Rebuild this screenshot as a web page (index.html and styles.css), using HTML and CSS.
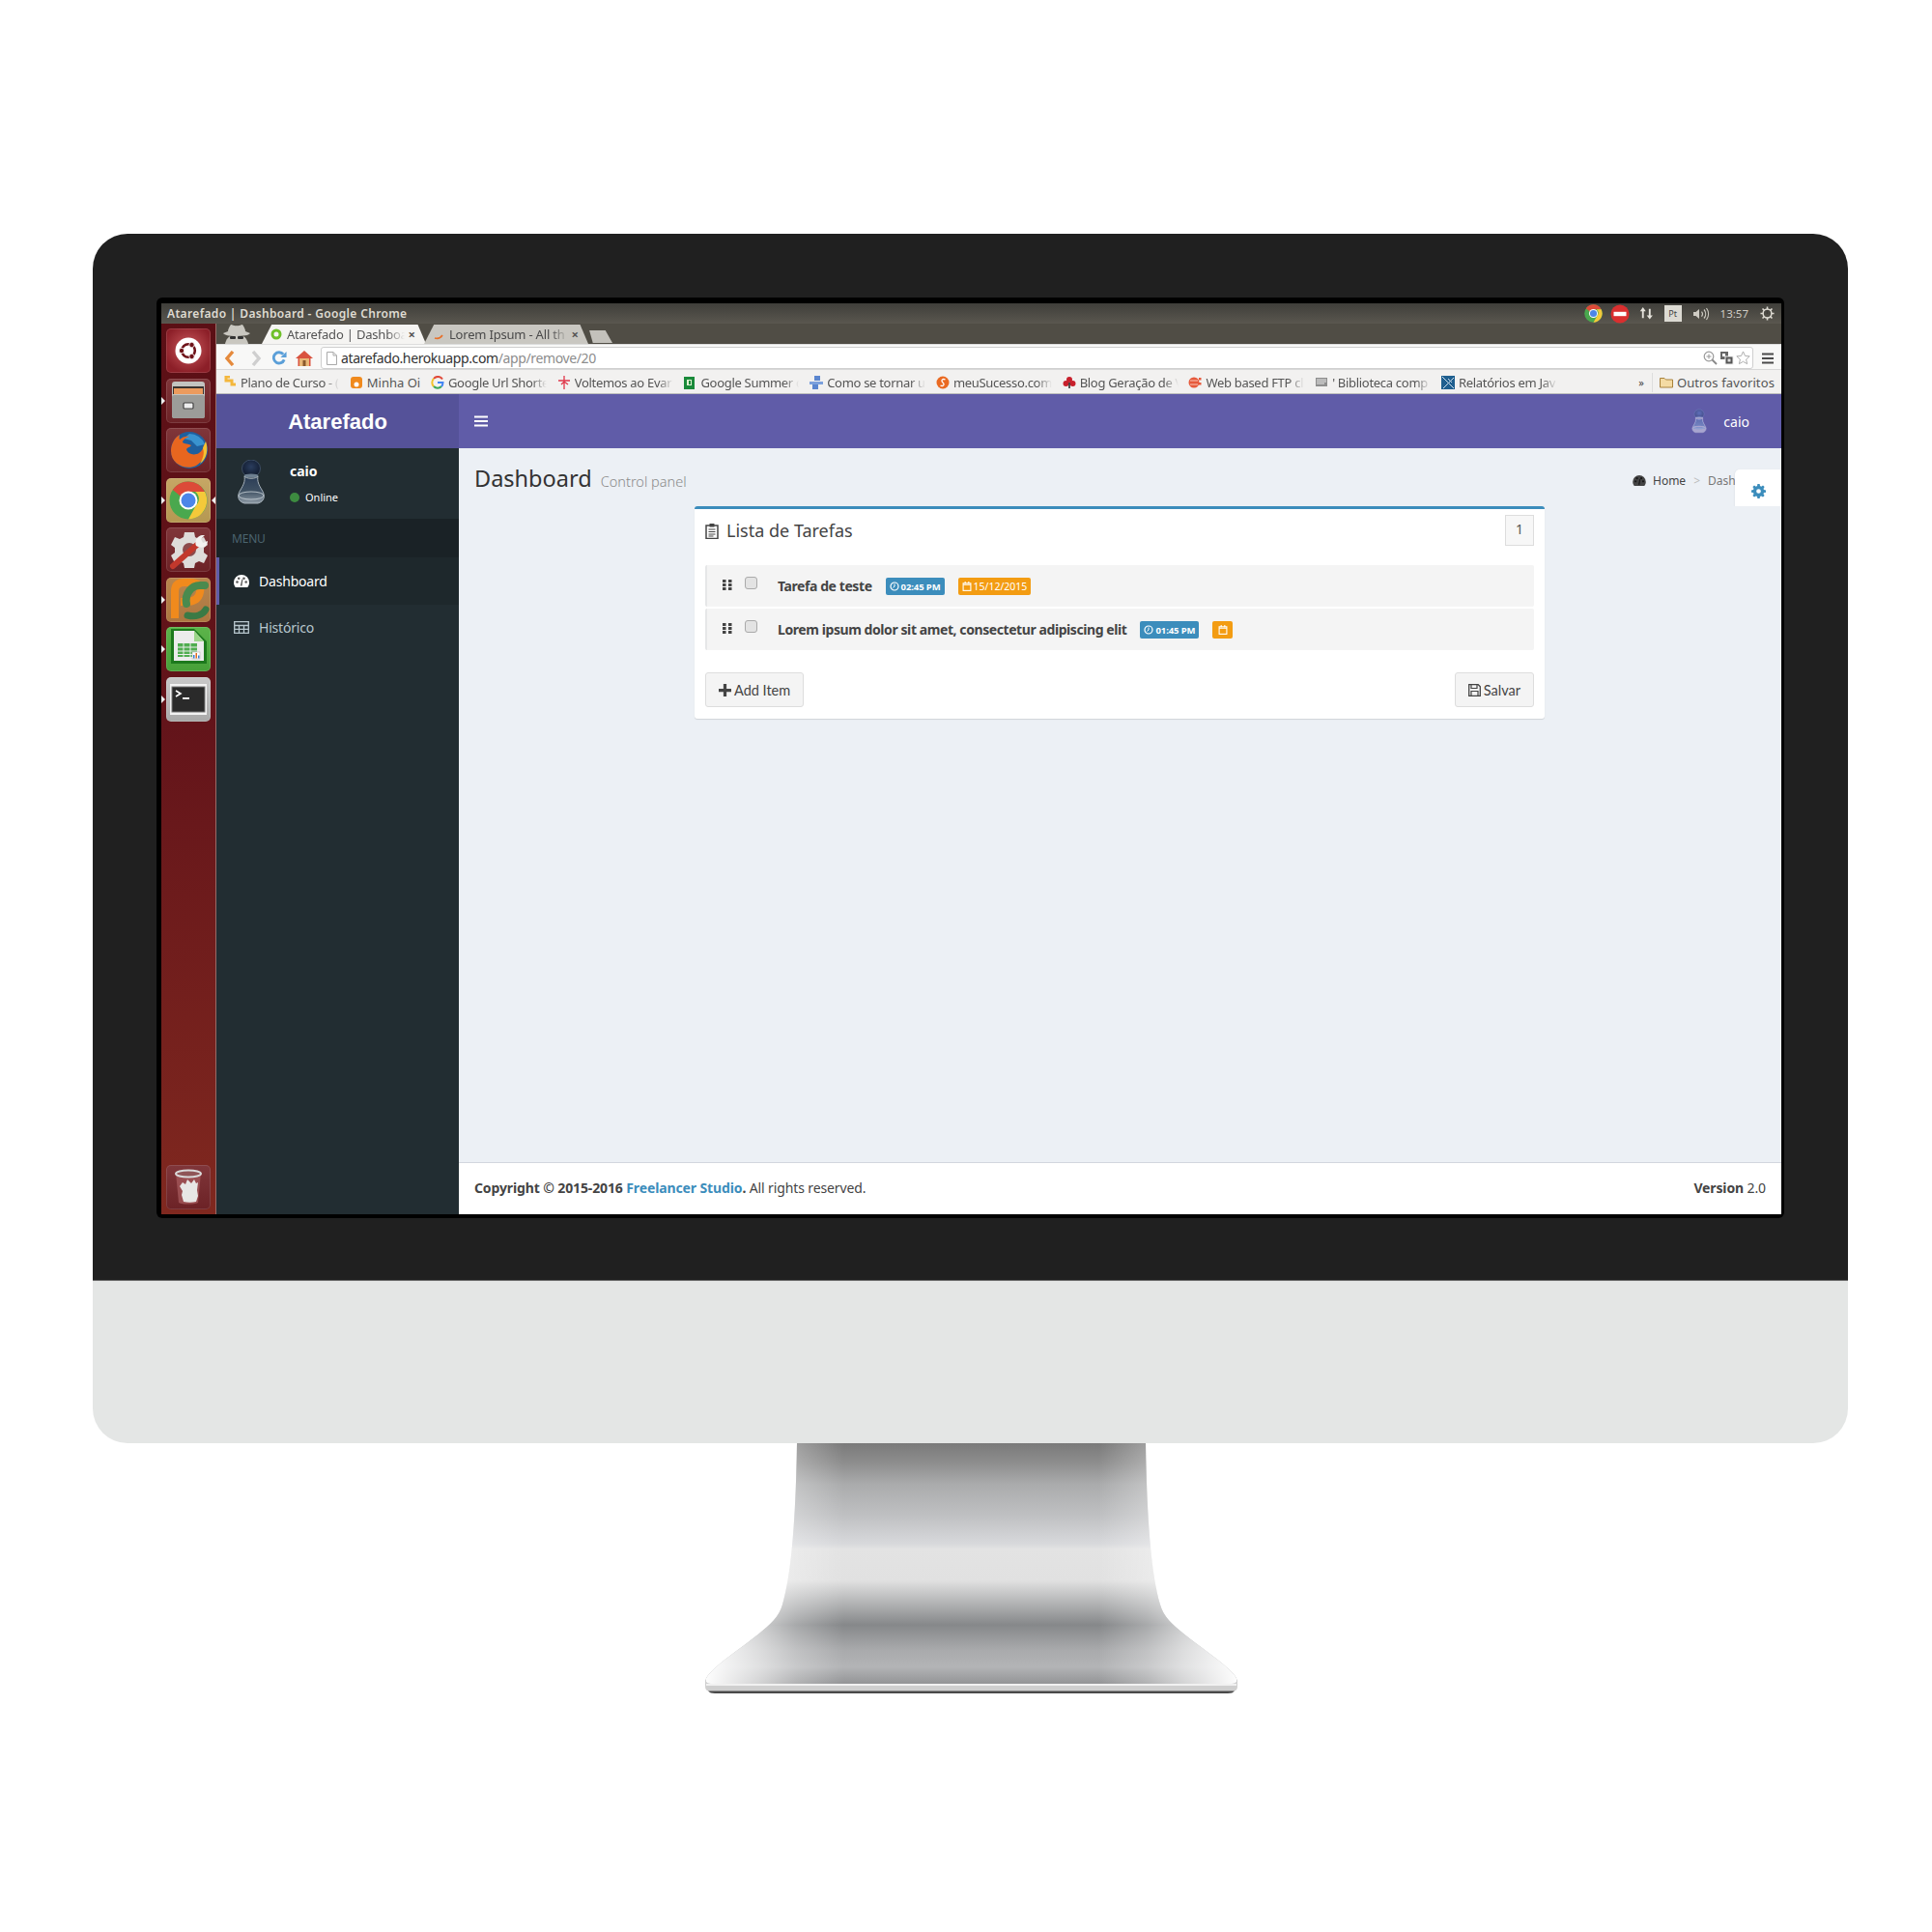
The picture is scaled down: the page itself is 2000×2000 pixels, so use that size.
FILE: index.html
```html
<!DOCTYPE html>
<html lang="pt">
<head>
<meta charset="utf-8">
<title>Atarefado mockup</title>
<link rel="stylesheet" href="styles.css">
</head>
<body>
<svg class="defs" width="0" height="0" aria-hidden="true">
  <defs>
    <linearGradient id="pawnBody" x1="0" y1="0" x2="0" y2="1"><stop offset="0" stop-color="#2a3c56"/><stop offset=".55" stop-color="#3f5163"/><stop offset="1" stop-color="#8f9ba6"/></linearGradient>
    <radialGradient id="pawnHead" cx=".5" cy=".4" r=".6"><stop offset="0" stop-color="#2a3d5e"/><stop offset="1" stop-color="#10192b"/></radialGradient>
    <linearGradient id="standFill" x1="0" y1="0" x2="0" y2="1">
      <stop offset="0" stop-color="#7a7a7a"/><stop offset=".08" stop-color="#8d8d8d"/><stop offset=".17" stop-color="#aaabac"/><stop offset=".3" stop-color="#bfc0c2"/><stop offset=".42" stop-color="#d8d9dc"/><stop offset=".44" stop-color="#e3e3e3"/><stop offset=".57" stop-color="#e1e1e1"/><stop offset=".66" stop-color="#b5b6b7"/><stop offset=".755" stop-color="#86888a"/><stop offset=".86" stop-color="#a9aaac"/><stop offset=".93" stop-color="#b3b4b6"/><stop offset="1" stop-color="#939496"/>
    </linearGradient>
    <linearGradient id="standGlow" x1="0" y1="0" x2="1" y2="0">
      <stop offset="0" stop-color="#fff" stop-opacity=".98"/><stop offset=".1" stop-color="#fff" stop-opacity=".6"/><stop offset=".17" stop-color="#fff" stop-opacity=".28"/><stop offset=".26" stop-color="#fff" stop-opacity="0"/><stop offset=".74" stop-color="#fff" stop-opacity="0"/><stop offset=".83" stop-color="#fff" stop-opacity=".28"/><stop offset=".9" stop-color="#fff" stop-opacity=".6"/><stop offset="1" stop-color="#fff" stop-opacity=".98"/>
    </linearGradient>
    <symbol id="pawn" viewBox="0 0 30 46">
      <ellipse cx="15" cy="9" rx="9.500" ry="9" fill="url(#pawnHead)" stroke="#44566e" stroke-width=".8"/>
      <ellipse cx="15" cy="16.500" rx="7.500" ry="2" fill="#6d7f90"/>
      <path d="M8 17C10 20 20 20 22 17C21 22 23 26 26 31C30 37 29 43 22 45H8C1 43 0 37 4 31C7 26 9 22 8 17Z" fill="url(#pawnBody)" stroke="#a7b2bb" stroke-width="1"/>
      <ellipse cx="15" cy="37" rx="13" ry="4" fill="none" stroke="#c2cbd1" stroke-width=".9"/>
    </symbol>
    <symbol id="dash" viewBox="0 0 16 13">
      <path d="M8 0a8 8 0 0 0-8 8c0 2 .7 3.600 1.800 5h12.400c1.100-1.400 1.800-3 1.800-5a8 8 0 0 0-8-8Z" fill="currentColor"/>
      <circle cx="3.500" cy="7.500" r="1.300" fill="#000" opacity=".65"/><circle cx="5.200" cy="3.800" r="1.300" fill="#000" opacity=".65"/><circle cx="10.500" cy="3.800" r="1.300" fill="#000" opacity=".65"/><circle cx="12.700" cy="7.500" r="1.300" fill="#000" opacity=".65"/>
      <path d="M6.800 11.500 8.400 4.500l1 .2L8.500 11.500Z" fill="#000" opacity=".65"/>
    </symbol>
    <symbol id="chromeLogo" viewBox="0 0 40 40">
      <circle cx="20" cy="20" r="19.500" fill="#4aa84e"/>
      <path d="M20 .5A19.500 19.500 0 0 1 37 11H20A9 9 0 0 0 12 15.800L3.800 9A19.500 19.500 0 0 1 20 .5Z" fill="#dc4a38"/>
      <path d="M37 11A19.500 19.500 0 0 1 20 39.500L28 25A9 9 0 0 0 27 11Z" fill="#f4c93a"/>
      <circle cx="20" cy="20" r="9.500" fill="#fff"/><circle cx="20" cy="20" r="7.500" fill="#4c86e8"/>
    </symbol>
  </defs>
</svg>

<main class="monitor">
  <section class="bezel">
    <div class="screen">
      <header class="ubuntu-bar">
        <span class="window-title">Atarefado | Dashboard - Google Chrome</span>
        <div class="tray">
          <svg class="tray-round"><use href="#chromeLogo"/></svg>
          <svg class="tray-stop" viewBox="0 0 20 20"><circle cx="10" cy="10" r="9.500" fill="#d92f2f"/><rect x="3.500" y="7.800" width="13" height="4.400" fill="#fff"/></svg>
          <svg class="tray-net" viewBox="0 0 16 16"><path d="M4 1 .8 5.500h2.200V13h2V5.500h2.200ZM11.500 14.500 14.800 10h-2.300V3h-2v7H8.200Z" fill="#e6e3dc"/></svg>
          <span class="tray-lang">Pt</span>
          <svg class="tray-vol" viewBox="0 0 18 14"><path d="M1 5h2.500L7 2v10L3.500 9H1Z" fill="#cfccc4"/><path d="M9.500 4.500a4 4 0 0 1 0 5M12 2.500a7 7 0 0 1 0 9M14.500 1a10 10 0 0 1 0 12" fill="none" stroke="#cfccc4" stroke-width="1.200"/></svg>
          <span class="tray-time">13:57</span>
          <svg class="tray-gear" viewBox="0 0 16 16"><circle cx="8" cy="8" r="4.700" fill="none" stroke="#dedbd3" stroke-width="1.600"/><path d="M8 .5v3M8 12.500v3M.5 8h3M12.500 8h3M2.700 2.700l2 2M11.300 11.300l2 2M2.700 13.300l2-2M11.300 4.700l2-2" stroke="#dedbd3" stroke-width="1.700"/><path d="M8 4.500v4" stroke="#3f3d39" stroke-width="1.500"/></svg>
        </div>
      </header>
      <div class="desktop">
        <nav class="launcher">
          <div class="tile tile-ubuntu">
            <svg viewBox="0 0 46 46"><circle cx="23" cy="23" r="13.500" fill="#fff"/><circle cx="23" cy="23" r="6.800" fill="none" stroke="#6e1218" stroke-width="2.600"/><circle cx="16" cy="23" r="2.700" fill="#6e1218" stroke="#fff" stroke-width=".8"/><circle cx="26.500" cy="17" r="2.700" fill="#6e1218" stroke="#fff" stroke-width=".8"/><circle cx="26.500" cy="29" r="2.700" fill="#6e1218" stroke="#fff" stroke-width=".8"/></svg>
          </div>
          <div class="tile tile-dark pip">
            <svg viewBox="0 0 46 46"><rect x="6" y="3" width="34" height="38" rx="3" fill="#c3c3c0"/><rect x="7" y="8" width="32" height="8" fill="#3a3330"/><rect x="8" y="10" width="30" height="6" fill="#ec9b5e"/><rect x="6" y="17" width="34" height="24" rx="2" fill="#9c9c99"/><rect x="18" y="25" width="10" height="6" rx="1" fill="#eee" stroke="#444" stroke-width="1.200"/></svg>
          </div>
          <div class="tile tile-dark">
            <svg viewBox="0 0 46 46"><circle cx="24" cy="23" r="19" fill="#1f5f9e"/><path d="M24 6a17 17 0 0 1 16 11l-8 2-6-6-8-2Z" fill="#3a93cf"/><path d="M5 24c0-8 4-14 9-17-1 3 0 5 0 5 3-3 7-4 10-3-4 1-7 4-7 6 2 2 6 1 9 3-1 2-4 2-5 4 1 5 8 7 13 4 3-2 5-6 5-9 3 9-1 18-8 22-10 5-26-1-26-15Z" fill="#e8661f"/><path d="M41 14c3 8 1 18-6 23 3-5 5-11 3-16 1-3 2-5 3-7Z" fill="#f6c230"/></svg>
          </div>
          <div class="tile tile-gold pip pip-both">
            <svg viewBox="0 0 46 46"><use href="#chromeLogo" x="3" y="3" width="40" height="40"/></svg>
          </div>
          <div class="tile tile-dark">
            <svg viewBox="0 0 46 46"><path d="M19 5h10l1 5 4 2 5-2 4 8-4 3v5l4 3-4 8-5-2-4 2-1 5H19l-1-5-4-2-5 2-4-8 4-3v-5l-4-3 4-8 5 2 4-2Z" fill="#dedcda"/><circle cx="24" cy="23" r="7" fill="#8b4a4c"/><path d="M7 40 33 17" stroke="#c2382c" stroke-width="6" stroke-linecap="round"/><path d="M31 19c-2-5 1-10 6-11l3 0-4 4 2 4 5-2c0 5-5 9-12 5Z" fill="#f2f2f0"/></svg>
          </div>
          <div class="tile tile-amber pip">
            <svg viewBox="0 0 46 46"><path d="M9 42V14Q9 5 19 5H25Q37 5 35 15Q33 25 21 25H15" fill="none" stroke="#f08a1d" stroke-width="8" stroke-linejoin="round"/><path d="M40 8H35C26 8 19 17 21 27" fill="none" stroke="#4a8a4e" stroke-width="8" stroke-linecap="round"/><path d="M22 39C30 41 38 39 41 33" fill="none" stroke="#3a7a45" stroke-width="7" stroke-linecap="round"/></svg>
          </div>
          <div class="tile tile-green pip">
            <svg viewBox="0 0 46 46"><path d="M5 2h24l13 13v23H5Z" fill="#1d7a1d"/><path d="M8 4h21l10 11v20H8Z" fill="#ececec"/><path d="M29 4v11h10Z" fill="#9cd58a"/><rect x="12" y="17" width="20" height="14" fill="#4fad4f"/><path d="M12 21h20M12 25h20M12 28.500h20M18 17v14M25 17v14" stroke="#eee" stroke-width="1"/><rect x="27" y="26" width="8" height="7" fill="#fff" stroke="#aaa" stroke-width=".5"/><rect x="28" y="29" width="1.500" height="3.500" fill="#3a7bd5"/><rect x="30.500" y="27" width="1.500" height="5.500" fill="#e26a1d"/><rect x="33" y="29.500" width="1.500" height="3" fill="#3a7bd5"/></svg>
          </div>
          <div class="tile tile-silver pip">
            <svg viewBox="0 0 46 46"><rect x="4" y="7" width="38" height="32" fill="#f2f2f2"/><rect x="6" y="10" width="34" height="26" fill="#2a2a2a" stroke="#777" stroke-width="1"/><path d="M10 14l5 3-5 3" fill="none" stroke="#fff" stroke-width="1.600"/><rect x="17" y="21" width="7" height="1.800" fill="#fff"/></svg>
          </div>
          <div class="tile tile-dark tile-trash">
            <svg viewBox="0 0 46 46"><path d="M10 8h26l-3 31c-4 2-16 2-20 0Z" fill="#a55a5c" opacity=".75"/><ellipse cx="23" cy="9" rx="13" ry="3.500" fill="#8f5557" stroke="#d9d9d9" stroke-width="2"/><path d="M14 22l3-4 3 2 2-5 4 4 3-4 2 4 2-1-1 8 1 6-2 6c-4 1-9 1-13 0l-2-7 1-4Z" fill="#e7e7e5"/></svg>
          </div>
        </nav>

        <div class="browser">
          <div class="tabstrip">
            <svg class="spy" viewBox="0 0 30 20"><path d="M9 0c2 0 4 2 6 1 2 1 4-1 6-1 2 3 3 5 3 7l5 2c-2 2-5 3-14 3S3 11 1 9l5-2c0-2 1-4 3-7Z" fill="#c9c7c0"/><path d="M3 20c1-5 4-8 6-8h12c2 0 5 3 6 8Z" fill="#c9c7c0"/><rect x="8" y="12" width="6" height="3" rx="1" fill="#333"/><rect x="16" y="12" width="6" height="3" rx="1" fill="#333"/></svg>
            <div class="tab tab-active">
              <svg class="favicon" viewBox="0 0 12 12"><circle cx="6" cy="6" r="4" fill="none" stroke="#6fc02a" stroke-width="3"/></svg>
              <span class="tab-label">Atarefado | Dashboa</span>
              <span class="tab-x">×</span>
            </div>
            <div class="tab tab-idle">
              <svg class="favicon" viewBox="0 0 12 12"><path d="M2 10c3 1 6 0 8-3" fill="none" stroke="#e8702a" stroke-width="1.600"/></svg>
              <span class="tab-label">Lorem Ipsum - All th</span>
              <span class="tab-x">×</span>
            </div>
            <div class="tab-new"></div>
          </div>
          <div class="toolbar">
            <svg class="tool tool-back" viewBox="0 0 12 16"><path d="M9 1 3 8l6 7" fill="none" stroke="#e58a3c" stroke-width="3.400"/></svg>
            <svg class="tool tool-fwd" viewBox="0 0 12 16"><path d="M3 1l6 7-6 7" fill="none" stroke="#cfcfcf" stroke-width="3.400"/></svg>
            <svg class="tool tool-reload" viewBox="0 0 16 16"><path d="M13 10a6 6 0 1 1-1-6" fill="none" stroke="#5b9fd8" stroke-width="3"/><path d="M15.500 1v6.500H9Z" fill="#5b9fd8"/></svg>
            <svg class="tool tool-home" viewBox="0 0 18 16"><path d="M9 0 0 8h2.500v8h13V8H18Z" fill="#d9533f"/><rect x="4" y="8" width="10" height="8" fill="#e8b777"/><rect x="7.500" y="10" width="3" height="6" fill="#8a5a2c"/></svg>
            <div class="omnibox">
              <svg class="page-ico" viewBox="0 0 11 14"><path d="M.5.500h6.500l3.500 3.500v9.500H.5Z" fill="#fff" stroke="#aaa"/><path d="M7 .5V4h3.500" fill="none" stroke="#aaa"/></svg>
              <span class="url">atarefado.herokuapp.com<span class="url-path">/app/remove/20</span></span>
              <svg class="omni-ico" viewBox="0 0 15 15"><circle cx="6" cy="6" r="4.800" fill="#fff" stroke="#999" stroke-width="1.200"/><path d="M3.500 6h5M6 3.500v5" stroke="#999"/><path d="M9.500 9.500 14 14" stroke="#888" stroke-width="1.800"/></svg>
              <svg class="omni-ico" viewBox="0 0 15 15"><rect x="1" y="1" width="8" height="8" fill="#666"/><rect x="6" y="6" width="8" height="8" fill="#555" stroke="#eee"/><rect x="3" y="3" width="3" height="3" fill="#fff"/><rect x="8.500" y="8.500" width="3" height="3" fill="#ddd"/></svg>
              <svg class="omni-ico" viewBox="0 0 16 16"><path d="M8 1l2.100 4.700 5 .5-3.800 3.400 1.100 5L8 12l-4.400 2.600 1.100-5L.9 6.200l5-.5Z" fill="#fff" stroke="#aaa"/></svg>
            </div>
            <svg class="tool tool-menu" viewBox="0 0 12 12"><path d="M0 1.500h12M0 6h12M0 10.500h12" stroke="#4a4a4a" stroke-width="2.200"/></svg>
          </div>
          <div class="bookmarks">
            <div class="bm"><svg class="bm-ico" viewBox="0 0 14 14"><path d="M7 1H3v4h6v4h4" fill="none" stroke="#f4b73c" stroke-width="3"/></svg><span class="bm-text">Plano de Curso - (</span></div>
            <div class="bm bm-short"><svg class="bm-ico" viewBox="0 0 14 14"><rect x="1" y="1" width="12" height="12" rx="3" fill="#f08a1d"/><circle cx="7" cy="9" r="2.500" fill="#fff"/></svg><span class="bm-text">Minha Oi</span></div>
            <div class="bm"><svg class="bm-ico" viewBox="0 0 14 14"><path d="M12 3.500A5.500 5.500 0 0 0 3 3" fill="none" stroke="#e04a3a" stroke-width="2"/><path d="M3 3a5.500 5.500 0 0 0 0 8" fill="none" stroke="#f4c22b" stroke-width="2"/><path d="M3 11a5.500 5.500 0 0 0 8 0" fill="none" stroke="#3aa757" stroke-width="2"/><path d="M11 11c1-1 1.500-2 1.500-4H7" fill="none" stroke="#4285f4" stroke-width="2"/></svg><span class="bm-text">Google Url Shorte</span></div>
            <div class="bm"><svg class="bm-ico" viewBox="0 0 14 14"><path d="M7 0v14M1 5h12M4 9l3-3 4 3" fill="none" stroke="#e0364a" stroke-width="1.300"/></svg><span class="bm-text">Voltemos ao Evar</span></div>
            <div class="bm"><svg class="bm-ico" viewBox="0 0 14 14"><rect x="1" y="1" width="11" height="13" fill="#1a8a3a"/><rect x="4" y="4" width="5" height="6" fill="#dff3d0"/><rect x="6" y="5" width="2" height="4" fill="#1a8a3a"/></svg><span class="bm-text">Google Summer c</span></div>
            <div class="bm"><svg class="bm-ico" viewBox="0 0 14 14"><rect x="5" y="0" width="6" height="5" fill="#5b86cf"/><rect x="0" y="6" width="14" height="3" fill="#7ba0dc"/><rect x="3" y="9" width="6" height="5" fill="#5b86cf"/></svg><span class="bm-text">Como se tornar u</span></div>
            <div class="bm"><svg class="bm-ico" viewBox="0 0 14 14"><circle cx="7" cy="7" r="6.500" fill="#ea6a22"/><path d="M9.500 4C7 2.500 4.500 5 7 7s0 4.500-2.500 3" fill="none" stroke="#fff" stroke-width="1.300"/></svg><span class="bm-text">meuSucesso.com</span></div>
            <div class="bm"><svg class="bm-ico" viewBox="0 0 14 14"><circle cx="7" cy="4" r="3" fill="#c8202c"/><circle cx="3.500" cy="8" r="3" fill="#c8202c"/><circle cx="10.500" cy="8" r="3" fill="#c8202c"/><path d="M7 7v6" stroke="#222" stroke-width="1.500"/></svg><span class="bm-text">Blog Geração de V</span></div>
            <div class="bm"><svg class="bm-ico" viewBox="0 0 14 14"><circle cx="6" cy="7" r="5.500" fill="#e65a3c"/><path d="M2 5h8M2 9h8" stroke="#f9c7b8"/><rect x="11" y="2" width="2.500" height="2.500" fill="#e65a3c"/><rect x="11" y="7" width="2.500" height="2.500" fill="#e65a3c"/></svg><span class="bm-text">Web based FTP cl</span></div>
            <div class="bm"><svg class="bm-ico" viewBox="0 0 14 14"><rect x="1" y="2" width="12" height="9" fill="#8e8e8e"/><path d="M2 4h10M2 6h10M2 8h8" stroke="#e8e8e8"/></svg><span class="bm-text">' Biblioteca comp</span></div>
            <div class="bm"><svg class="bm-ico" viewBox="0 0 14 14"><rect x="0" y="0" width="14" height="14" fill="#1f5f8f"/><path d="M1 1l12 12M13 2 2 13M7 3l4 4" stroke="#cfe0ee" stroke-width="1"/></svg><span class="bm-text">Relatórios em Jav</span></div>
            <div class="bm-end">
              <span class="bm-more">»</span>
              <span class="bm-sep"></span>
              <svg class="bm-ico" viewBox="0 0 14 14"><path d="M.5 2.500h4.500l1.500 1.500h7v8H.5Z" fill="#f4dba4" stroke="#a8823c"/></svg>
              <span class="bm-other">Outros favoritos</span>
            </div>
          </div>

          <div class="app">
            <div class="app-header">
              <div class="logo">Atarefado</div>
              <div class="navbar">
                <svg class="burger" viewBox="0 0 14 12"><path d="M0 1.500h14M0 6h14M0 10.500h14" stroke="#fff" stroke-width="2.200"/></svg>
                <div class="nav-user">
                  <svg class="nav-pawn"><use href="#pawn"/></svg>
                  <span>caio</span>
                </div>
              </div>
            </div>
            <div class="app-body">
              <aside class="sidebar">
                <div class="user-panel">
                  <svg class="side-pawn"><use href="#pawn"/></svg>
                  <div class="user-info">
                    <div class="user-name">caio</div>
                    <div class="user-status"><span class="dot"></span>Online</div>
                  </div>
                </div>
                <div class="menu-head">MENU</div>
                <a class="menu-item menu-active"><svg class="menu-ico"><use href="#dash"/></svg>Dashboard</a>
                <a class="menu-item"><svg class="menu-ico" viewBox="0 0 16 13"><path d="M.7.700h14.600v11.600H.7ZM.7 4.500h14.600M.7 8.300h14.600M5.500 4.500v8M10.500 4.500v8" fill="none" stroke="currentColor" stroke-width="1.300"/></svg>Histórico</a>
              </aside>
              <div class="content">
                <div class="content-main">
                  <div class="page-head">
                    <h1 class="page-title">Dashboard <small>Control panel</small></h1>
                    <div class="crumbs"><svg class="crumb-ico"><use href="#dash"/></svg><span class="crumb-home">Home</span><span class="crumb-sep">&gt;</span><span class="crumb-cur">Dashboard</span></div>
                    <div class="gear-tab">
                      <svg viewBox="0 0 16 16"><path d="M6.800 0h2.400l.4 2.200 1.300.6 1.900-1.200 1.700 1.700-1.200 1.900.6 1.300 2.100.3v2.400l-2.100.4-.6 1.300 1.200 1.900-1.700 1.700-1.900-1.200-1.300.6-.4 2.100H6.800l-.4-2.100-1.300-.6-1.900 1.200-1.700-1.700 1.200-1.900-.6-1.300L0 9.200V6.800l2.100-.3.600-1.300-1.200-1.900 1.700-1.700 1.900 1.200 1.300-.6ZM8 5.500a2.500 2.500 0 1 0 0 5 2.500 2.500 0 0 0 0-5Z" fill="#3c8dbc" fill-rule="evenodd"/></svg>
                    </div>
                  </div>
                  <section class="box">
                    <div class="box-head">
                      <svg class="clip" viewBox="0 0 14 17"><path d="M1 3h12v13.500H1Z" fill="none" stroke="#444" stroke-width="1.500"/><rect x="4.500" y="1" width="5" height="3.500" fill="#444"/><path d="M3.500 7h7M3.500 9.500h7M3.500 12h7M3.500 14h5" stroke="#444"/></svg>
                      <h3 class="box-title">Lista de Tarefas</h3>
                      <span class="pager">1</span>
                    </div>
                    <ul class="todo">
                      <li class="todo-item">
                        <svg class="grip" viewBox="0 0 10 11"><path d="M0 0h3.500v3H0ZM6 0h3.500v3H6ZM0 4h3.500v3H0ZM6 4h3.500v3H6ZM0 8h3.500v3H0ZM6 8h3.500v3H6Z" fill="#444"/></svg>
                        <span class="check"></span>
                        <span class="todo-text">Tarefa de teste</span>
                        <span class="tag tag-blue"><svg viewBox="0 0 10 10"><circle cx="5" cy="5" r="4" fill="none" stroke="#fff" stroke-width="1.200"/><path d="M5 2.500V5L3.500 6.500" fill="none" stroke="#fff"/></svg>02:45 PM</span>
                        <span class="tag tag-amber"><svg viewBox="0 0 10 11"><rect x=".7" y="2" width="8.600" height="8.300" fill="none" stroke="#fff" stroke-width="1.200"/><path d="M.7 3.500h8.600M3 0v2.500M7 0v2.500" stroke="#fff" stroke-width="1.200"/></svg>15/12/2015</span>
                      </li>
                      <li class="todo-item">
                        <svg class="grip" viewBox="0 0 10 11"><path d="M0 0h3.500v3H0ZM6 0h3.500v3H6ZM0 4h3.500v3H0ZM6 4h3.500v3H6ZM0 8h3.500v3H0ZM6 8h3.500v3H6Z" fill="#444"/></svg>
                        <span class="check"></span>
                        <span class="todo-text">Lorem ipsum dolor sit amet, consectetur adipiscing elit</span>
                        <span class="tag tag-blue"><svg viewBox="0 0 10 10"><circle cx="5" cy="5" r="4" fill="none" stroke="#fff" stroke-width="1.200"/><path d="M5 2.500V5L3.500 6.500" fill="none" stroke="#fff"/></svg>01:45 PM</span>
                        <span class="tag tag-amber tag-icon"><svg viewBox="0 0 10 11"><rect x=".7" y="2" width="8.600" height="8.300" fill="none" stroke="#fff" stroke-width="1.200"/><path d="M.7 3.500h8.600M3 0v2.500M7 0v2.500" stroke="#fff" stroke-width="1.200"/></svg></span>
                      </li>
                    </ul>
                    <div class="box-foot">
                      <button class="btn"><svg viewBox="0 0 12 12"><path d="M4.500 0h3v4.500H12v3H7.500V12h-3V7.500H0v-3h4.500Z" fill="#444"/></svg>Add Item</button>
                      <button class="btn"><svg viewBox="0 0 13 13"><path d="M.7.700h9.500l2.100 2.100v9.500H.7Z" fill="none" stroke="#444" stroke-width="1.300"/><path d="M3 1v3.500h6V1M3 12V7.500h7V12" fill="none" stroke="#444" stroke-width="1.200"/></svg>Salvar</button>
                    </div>
                  </section>
                </div>
                <footer class="app-footer">
                  <span><b>Copyright © 2015-2016 <a class="foot-link">Freelancer Studio</a>.</b> All rights reserved.</span>
                  <span><b>Version</b> 2.0</span>
                </footer>
              </div>
            </div>
          </div>
        </div>
      </div>
    </div>
  </section>
  <div class="chin"></div>
  <svg class="stand" width="551" height="260" viewBox="0 0 551 260">
    <path d="M0 245V252Q0 257 6 257H545Q551 257 551 252V245Z" fill="#cfcfcf"/>
    <rect x="1" y="249" width="549" height="2" fill="#f1f1f1"/>
    <path d="M3 256.500Q5 259 10 259H541Q546 259 548 256.500Z" fill="#4a4a4a"/>
    <path d="M95 0H456C457 60 460 130 471 167C474 179 484 188 495 197C515 213 535 226 546 238C553 245 551 249 545 249H6C0 249-2 245 5 238C16 226 36 213 56 197C67 188 77 179 80 167C91 130 94 60 95 0Z" fill="url(#standFill)"/>
    <path d="M95 0H456C457 60 460 130 471 167C474 179 484 188 495 197C515 213 535 226 546 238C553 245 551 249 545 249H6C0 249-2 245 5 238C16 226 36 213 56 197C67 188 77 179 80 167C91 130 94 60 95 0Z" fill="url(#standGlow)"/>
  </svg>
</main>
</body>
</html>
```
FILE: styles.css
```css
* { box-sizing: border-box; }
html, body { margin: 0; padding: 0; background: #fff; }
body { height: 2000px; overflow: hidden; font-family: "Lato", "Noto Sans", sans-serif; }
.defs { position: absolute; }
ul { list-style: none; margin: 0; padding: 0; }
h1, h3 { margin: 0; font-weight: 400; }
svg { display: block; flex: none; }

/* monitor shell */
.monitor { width: 1817px; margin: 242px 0 0 96px; display: flex; flex-direction: column; align-items: center; }
.bezel { width: 100%; height: 1084px; background: #202020; border-radius: 36px 36px 0 0; padding: 66px 66px 0; border-bottom: 1px solid #6b6b6b; }
.screen { width: 100%; height: 953px; background: #000; border-radius: 6px; padding: 6px 3px 4px 5px; display: flex; flex-direction: column; }
.chin { width: 100%; height: 168px; background: #e4e6e5; border-radius: 0 0 36px 36px; }
.stand { margin-left: 2px; }

/* ubuntu top bar */
.ubuntu-bar { height: 21px; flex: none; background: linear-gradient(#3f3e3a, #5a574f); display: flex; align-items: center; justify-content: space-between; padding: 0 7px 0 6px; font-family: "Noto Sans", sans-serif; }
.window-title { font-size: 12px; font-weight: 600; color: #dfdbd2; letter-spacing: .34px; }
.tray { display: flex; align-items: center; }
.tray-round { width: 19px; height: 19px; margin-right: 8px; }
.tray-stop { width: 20px; height: 20px; margin-right: 10px; }
.tray-net { width: 15px; height: 15px; margin-right: 11px; }
.tray-lang { width: 18px; height: 17px; background: #dcdad3; color: #444; font-size: 9px; line-height: 17px; text-align: center; margin-right: 11px; }
.tray-vol { width: 18px; height: 14px; margin-right: 11px; }
.tray-time { font-size: 11.500px; color: #cfccc4; margin-right: 12px; }
.tray-gear { width: 15px; height: 15px; }

.desktop { flex: 1; display: flex; min-height: 0; }

/* launcher */
.launcher { width: 57px; flex: none; background: linear-gradient(#5b0f15, #63141a 45%, #80281f); border-right: 1px solid #9a6a66; padding: 5px 0 5px 5px; display: flex; flex-direction: column; gap: 5.5px; }
.tile { position: relative; width: 46px; height: 46px; flex: none; border-radius: 5px; overflow: visible; box-shadow: inset 0 0 0 1px rgba(255,255,255,.12); }
.tile svg { width: 46px; height: 46px; }
.tile-ubuntu { background: radial-gradient(circle at 50% 45%, #c9585c, #8c1f28 75%); }
.tile-dark { background: linear-gradient(#80363a, #6c2226); }
.tile-gold { background: linear-gradient(#c6a765, #b59852); }
.tile-amber { background: linear-gradient(#b9864d, #ad7640); }
.tile-green { background: linear-gradient(#5cb44a, #46a038); }
.tile-silver { background: linear-gradient(#c9c9c9, #a9a9a9); }
.tile-trash { margin-top: auto; }
.pip::before { content: ""; position: absolute; left: -5px; top: 19px; border-style: solid; border-width: 4px 0 4px 4px; border-color: transparent transparent transparent #eee; }
.pip-both::after { content: ""; position: absolute; right: -5px; top: 19px; border-style: solid; border-width: 4px 4px 4px 0; border-color: transparent #eee transparent transparent; }

/* browser chrome */
.browser { flex: 1; min-width: 0; display: flex; flex-direction: column; font-family: "Noto Sans", sans-serif; }
.tabstrip { height: 21px; flex: none; background: #504d45; display: flex; align-items: flex-end; padding-left: 6px; }
.spy { width: 30px; height: 20px; margin-right: 11px; }
.tab { height: 20px; display: flex; align-items: center; font-size: 13px; color: #555; clip-path: polygon(6% 0, 95% 0, 100% 100%, 0 100%); }
.tab-active { width: 170px; background: #f5f4f2; padding: 0 11px 0 9px; }
.tab-idle { width: 170px; background: #c9c7c1; padding: 0 10px 0 9px; margin-left: -2px; color: #4a4a4a; }
.favicon { width: 12px; height: 12px; margin-right: 5px; }
.tab-label { flex: 1; min-width: 0; overflow: hidden; white-space: nowrap; letter-spacing: -.2px; -webkit-mask-image: linear-gradient(90deg, #000 85%, transparent); mask-image: linear-gradient(90deg, #000 85%, transparent); }
.tab-x { margin-left: 4px; font-weight: 700; font-size: 13px; color: #555; }
.tab-new { width: 26px; height: 13px; margin: 0 0 1px -1px; background: #c3c1bb; clip-path: polygon(8% 0, 72% 0, 100% 100%, 22% 100%); }

.toolbar { height: 26px; flex: none; background: #f8f8f7; display: flex; align-items: center; padding: 2px 8px 0; border-top: 1px solid #ddd; }
.tool { flex: none; }
.tool-back { width: 12px; height: 16px; margin-right: 15px; }
.tool-fwd { width: 12px; height: 16px; margin-right: 11px; }
.tool-reload { width: 15px; height: 15px; margin-right: 9px; }
.tool-home { width: 18px; height: 16px; margin-right: 8px; }
.tool-menu { width: 12px; height: 12px; margin-left: 9px; }
.omnibox { flex: 1; height: 23px; background: #fff; border: 1px solid #cfcfcf; border-radius: 3px; display: flex; align-items: center; padding: 0 2px 0 5px; }
.page-ico { width: 11px; height: 14px; margin-right: 4px; }
.url { flex: 1; font-size: 14px; color: #333; letter-spacing: -.38px; white-space: nowrap; }
.url-path { color: #8d8d8d; }
.omni-ico { width: 15px; height: 15px; margin-left: 2px; }

.bookmarks { height: 26px; flex: none; background: #f2f1f0; border-top: 1px solid #d8d8d8; border-bottom: 1px solid #bdbdbd; display: flex; align-items: center; padding: 1px 7px 0; font-size: 13px; color: #555; }
.bm { display: flex; align-items: center; margin-right: 10.750px; flex: none; }
.bm-ico { width: 14px; height: 14px; margin-right: 4px; }
.bm-text { display: block; width: 102px; overflow: hidden; white-space: nowrap; letter-spacing: -.3px; -webkit-mask-image: linear-gradient(90deg, #000 85%, transparent); mask-image: linear-gradient(90deg, #000 85%, transparent); }
.bm-short .bm-text { width: auto; letter-spacing: 0; -webkit-mask-image: none; mask-image: none; }
.bm-end { margin-left: auto; display: flex; align-items: center; }
.bm-more { font-size: 11px; color: #444; }
.bm-sep { width: 1px; height: 20px; background: #ddd; margin: 0 7px 0 8px; }
.bm-other { letter-spacing: .12px; }

/* AdminLTE app */
.app { flex: 1; min-height: 0; display: flex; flex-direction: column; }
.app-header { height: 56px; flex: none; display: flex; color: #fff; }
.logo { width: 251px; flex: none; background: #555299; font: 700 22px/58px "Liberation Sans", sans-serif; text-align: center; }
.navbar { flex: 1; background: #605ca8; display: flex; align-items: center; justify-content: space-between; padding: 0 33px 0 16px; }
.burger { width: 14px; height: 12px; }
.nav-user { display: flex; align-items: center; font-size: 14px; }
.nav-pawn { width: 16px; height: 26px; margin-right: 17px; filter: brightness(2.2); opacity: .45; }

.app-body { flex: 1; min-height: 0; display: flex; }
.sidebar { width: 251px; flex: none; background: #222d32; color: #b8c7ce; font-size: 14px; letter-spacing: -.2px; }
.user-panel { height: 73px; display: flex; padding: 13px 0 0 21px; }
.side-pawn { width: 30px; height: 46px; margin-top: -1px; }
.user-info { margin-left: 25px; }
.user-name { font-size: 14px; font-weight: 700; color: #fff; line-height: 20px; margin-top: 1px; letter-spacing: 0; }
.user-status { display: flex; align-items: center; font-size: 11px; color: #fff; margin-top: 10px; line-height: 14px; letter-spacing: 0; }
.dot { width: 10px; height: 10px; border-radius: 50%; background: #3d8b40; margin-right: 6px; }
.menu-head { height: 40px; background: #1a2226; color: #4b646f; font-size: 12px; line-height: 42px; padding-left: 16px; }
.menu-item { height: 46px; display: flex; align-items: center; padding-left: 15px; border-left: 3px solid transparent; }
.menu-active { background: #1e282c; color: #fff; border-left-color: #605ca8; height: 49px; }
.menu-ico { width: 16px; height: 13px; margin-right: 10px; }

.content { flex: 1; min-width: 0; display: flex; flex-direction: column; background: #ecf0f5; }
.content-main { flex: 1; min-height: 0; }
.page-head { position: relative; height: 60px; display: flex; justify-content: space-between; padding: 14px 0 0 16px; overflow: hidden; }
.page-title { font-size: 23.500px; line-height: 34px; color: #333; white-space: nowrap; }
.page-title small { font-size: 14.500px; color: #8a8a8a; margin-left: 3px; font-weight: 300; }
.crumbs { display: flex; align-items: center; height: 20px; margin-top: 9px; font-size: 12px; color: #444; width: 154px; flex: none; overflow: hidden; white-space: nowrap; }
.crumb-ico { width: 14px; height: 11px; margin-right: 7px; }
.crumb-sep { color: #bbb; margin: 0 8px; }
.crumb-cur { color: #777; }
.gear-tab { position: absolute; right: 0; top: 22px; width: 48px; height: 46px; padding-bottom: 2px; background: #fff; border-radius: 5px 0 0 5px; display: flex; align-items: center; justify-content: center; box-shadow: -1px 0 2px rgba(0,0,0,.04); }
.gear-tab svg { width: 15px; height: 15px; }

.box { width: 880px; height: 220px; margin-left: 244px; background: #fff; border-top: 3px solid #3c8dbc; border-radius: 3px; box-shadow: 0 1px 1px rgba(0,0,0,.12); padding: 6px 11px 0; position: relative; }
.box-head { display: flex; align-items: flex-start; height: 52px; color: #444; }
.clip { width: 14px; height: 17px; margin: 8px 8px 0 0; }
.box-title { font-size: 18px; line-height: 32px; margin-top: 0; flex: 1; }
.pager { width: 30px; height: 32px; background: #f7f7f7; border: 1px solid #ddd; font-size: 14px; line-height: 28px; text-align: center; color: #555; }
.todo { display: flex; flex-direction: column; gap: 2px; }
.todo-item { height: 43px; background: #f4f4f4; border-left: 2px solid #e6e7e8; border-radius: 2px; display: flex; align-items: center; padding-left: 16px; color: #444; }
.grip { width: 10px; height: 11px; margin-right: 14px; margin-bottom: 3px; }
.check { width: 13px; height: 13px; background: #e3e3e3; border: 1px solid #aaa; border-radius: 3px; margin: 0 21px 6px -1px; }
.todo-text { font-size: 14px; font-weight: 700; color: #444; margin: 0 14px 1px 0; white-space: nowrap; letter-spacing: -.42px; }
.tag { height: 18px; display: flex; align-items: center; color: #fff; font-size: 9.500px; font-weight: 700; padding: 0 4px; border-radius: 2px; margin-right: 14px; margin-top: 1px; white-space: nowrap; letter-spacing: -.1px; }
.tag svg { width: 10px; height: 10px; margin-right: 2px; }
.tag-blue { background: #3c8dbc; }
.tag-amber { background: #f39c12; letter-spacing: 0; font-weight: 400; font-size: 10.500px; }
.tag-icon { width: 21px; justify-content: center; }
.tag-icon svg { margin-right: 0; }
.box-foot { display: flex; justify-content: space-between; margin-top: 23px; }
.btn { height: 36px; background: #f4f4f4; border: 1px solid #ddd; border-radius: 3px; padding: 0 13px; display: flex; align-items: center; font: 14.500px "Lato", sans-serif; color: #444; }
.btn svg { width: 13px; height: 13px; margin-right: 3px; }

.app-footer { height: 54px; flex: none; background: #fff; border-top: 1px solid #d2d6de; display: flex; align-items: center; justify-content: space-between; padding: 0 16px 2px; font-size: 14px; color: #444; letter-spacing: -.12px; }
.foot-link { color: #3c8dbc; }
```
